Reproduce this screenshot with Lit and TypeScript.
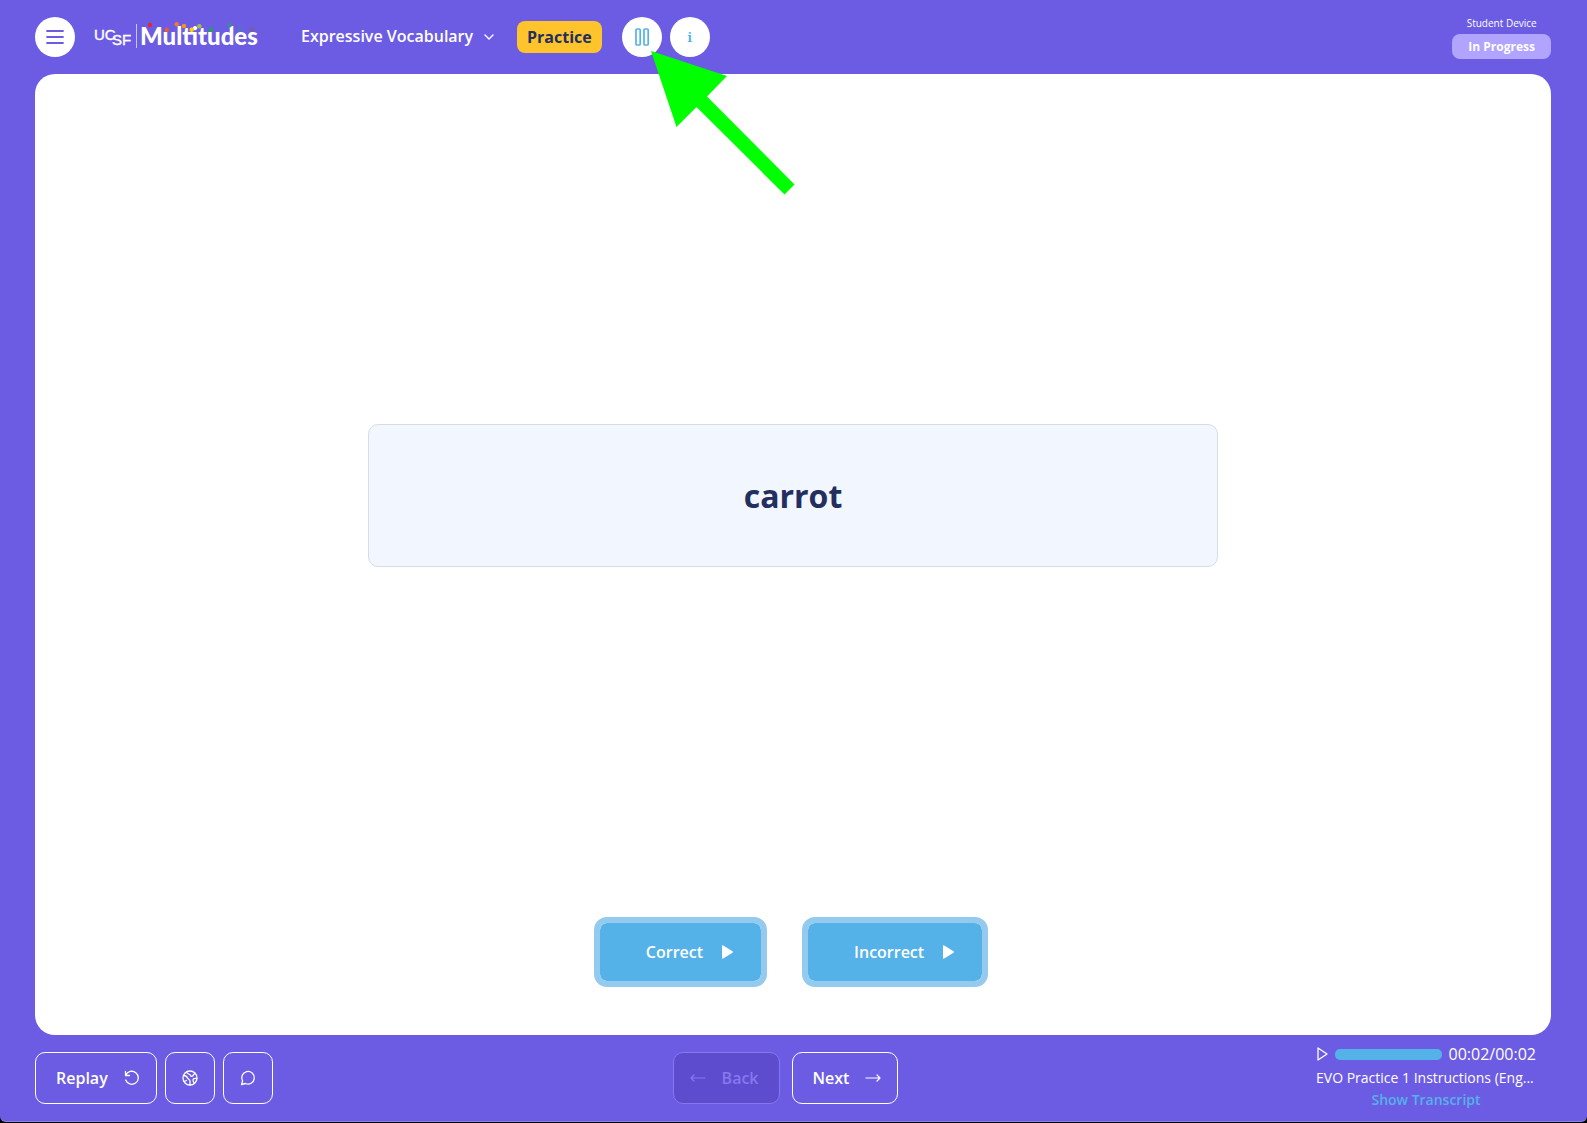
import { LitElement, html, css, svg } from "lit";
import { customElement, property } from "lit/decorators.js";

const DOTS: [number, number, string][] = [
  [56, 8, "#e8262d"], [72.7, 12.7, "#f05a28"], [82.7, 7.3, "#f4772a"], [90, 9, "#f7941d"],
  [97.7, 12.7, "#ffd400"], [105.3, 9.3, "#a3c23c"], [117, 12.7, "#1ca64c"], [135.7, 8.3, "#35918c"],
  [145.7, 12.5, "#4d78b8"], [157.7, 12.5, "#74609f"],
];

@customElement("brand-logo")
export class BrandLogo extends LitElement {
  static styles = css`
    :host { display: block; }
    svg { display: block; }
    .org { font: 400 15px "Liberation Sans", sans-serif; fill: #fff; stroke: #fff; stroke-width: 0.4px; }
    .name { font: 900 24px Lato, sans-serif; fill: #fff; }
  `;
  render() {
    return html`<svg width="164" height="40" viewBox="0 0 164 40" role="img" aria-label="UCSF Multitudes">
      <text class="org" x="0" y="23">UC</text>
      <text class="org" x="18" y="28">SF</text>
      <path d="M42.500 7V31" stroke="#c9c3f6" />
      <text class="name" x="46" y="28">Multitudes</text>
      ${DOTS.map(([x, y, c]) => svg`<circle cx=${x} cy=${y} r="2.200" fill=${c}></circle>`)}
    </svg>`;
  }
}

@customElement("pointer-arrow")
export class PointerArrow extends LitElement {
  static styles = css`
    :host { display: block; pointer-events: none; }
    svg { display: block; }
  `;
  render() {
    return html`<svg width="145" height="145" viewBox="0 0 145 145" aria-hidden="true">
      <path fill="#00ff00" d="M0 0L76 25L56 45.500L143.500 133.500L133.500 143.500L45.500 56L25.500 76Z" />
    </svg>`;
  }
}

@customElement("audio-status")
export class AudioStatus extends LitElement {
  @property() track = "";
  @property() elapsed = "00:00";
  @property() total = "00:00";

  static styles = css`
    :host { display: block; width: 220px; color: #fff; font: 14px/22px "Open Sans", sans-serif; }
    .row { display: flex; align-items: center; gap: 7px; height: 25px; }
    .play { display: flex; padding: 0; border: 0; background: none; color: inherit; cursor: pointer; }
    progress { appearance: none; flex: 1; min-width: 0; height: 11px; border: 0; border-radius: 5px; overflow: hidden; background: #fff; }
    progress::-webkit-progress-bar { background: #55b2e9; }
    progress::-webkit-progress-value { background: #55b2e9; }
    .time { font-size: 16px; }
    .track { margin: 0; overflow: hidden; white-space: nowrap; }
    .transcript { display: block; text-align: center; font-weight: 600; color: #55b2e9; text-decoration: none; }
  `;
  render() {
    return html`
      <div class="row">
        <button class="play" aria-label="Play audio">
          <svg width="12" height="14" viewBox="0 0 12 14" fill="none" stroke="currentColor" stroke-width="1.300" stroke-linejoin="round"><path d="M2 1L11 7L2 13Z" /></svg>
        </button>
        <progress max="100" value="100" aria-label="Audio position"></progress>
        <span class="time">${this.elapsed}/${this.total}</span>
      </div>
      <p class="track">${this.track}</p>
      <a class="transcript" href="#transcript">Show Transcript</a>
    `;
  }
}

@customElement("app-root")
export class AppRoot extends LitElement {
  static styles = css`
    :host { display: block; background: #000; font: 16px/24px "Open Sans", sans-serif; color: #fff; }
    * { box-sizing: border-box; }
    button, select { font: inherit; color: inherit; cursor: pointer; }
    svg { display: block; flex: none; }
    .page { display: flex; flex-direction: column; min-height: 100vh; padding-bottom: 1px; }
    .shell { flex: 1; display: flex; flex-direction: column; padding: 0 36px 0 35px; background: #6c5ce4; border-bottom: 1px solid #8c80e6; border-radius: 0 0 6px 6px; }
    header { display: flex; align-items: center; height: 74px; }
    .round { display: grid; place-items: center; width: 40px; height: 40px; padding: 0; border: 0; border-radius: 50%; background: #fff; color: #55b2e9; }
    .menu { color: #6c5ce4; }
    .logo { margin-left: 19px; }
    .task { display: grid; align-items: center; margin-left: 43px; padding-bottom: 2px; }
    .task select { grid-area: 1 / 1; appearance: none; padding: 0 22px 0 0; border: 0; background: none; font-weight: 600; }
    .task svg { grid-area: 1 / 1; justify-self: end; margin-top: 2px; pointer-events: none; }
    .badge { margin-left: 21px; padding: 4px 10px; border-radius: 8px; background: #ffc32b; color: #222f5f; font-weight: 700; }
    .tools { display: flex; gap: 8px; margin-left: 20px; }
    .pause { position: relative; }
    pointer-arrow { position: absolute; left: 29px; top: 34px; z-index: 1; }
    .info { font: 700 13px/20px "Noto Serif", "DejaVu Serif", serif; }
    .device { margin-left: auto; text-align: center; font-size: 10px; line-height: 18px; }
    .state { margin-top: 3px; padding: 4px 16px 3px; border-radius: 8px; background: #b0a4ff; font-size: 12px; font-weight: 700; }
    .device div:first-child { line-height: 16px; }
    main { flex: 1; display: flex; flex-direction: column; padding-bottom: 48px; border-radius: 20px; background: #fff; }
    .stage { flex: 1; display: flex; align-items: center; justify-content: center; }
    .card { flex: 0 1 850px; margin: 0; padding: 47px 24px; border: 1px solid #d5dee8; border-radius: 10px; background: #f2f6ff; color: #222f5f; text-align: center; font-size: 32px; line-height: 47px; font-weight: 700; }
    .answers { display: flex; justify-content: center; gap: 35px; padding-right: 4px; }
    .answer { display: flex; align-items: center; gap: 19px; height: 70px; padding: 0 28px 0 46px; border: 6px solid #93caee; border-radius: 13px; background: #55b2e9; background-clip: padding-box; font-weight: 600; }
    footer { display: grid; grid-template-columns: 1fr auto 1fr; align-items: center; height: 86px; padding-right: 15px; }
    .group { display: flex; gap: 8px; }
    .nav { gap: 12px; }
    .outline { display: flex; align-items: center; justify-content: center; gap: 16px; height: 52px; padding: 0 16px; border: 1px solid #fff; border-radius: 10px; background: none; font-weight: 600; }
    .replay { padding: 0 16px 0 20px; }
    .next { padding: 0 16px 0 20px; }
    .back { padding: 0 20px 0 16px; }
    .outline:disabled { background: #5d4dce; border-color: #8678ee; color: #8678ee; cursor: default; }
    audio-status { justify-self: end; padding-bottom: 4px; }
  `;

  private play = html`<svg width="11" height="14" viewBox="0 0 11 14" fill="currentColor"><path d="M0 1.200Q0 0 1.200 .5L10.500 6.300Q11.300 7 10.500 7.700L1.200 13.500Q0 14 0 12.800Z" /></svg>`;

  render() {
    return html`
      <div class="page"><div class="shell">
        <header>
          <button class="round menu" aria-label="Menu">
            <svg width="18" height="14" viewBox="0 0 18 14" stroke="currentColor" stroke-width="1.800" stroke-linecap="round"><path d="M1 1H17M1 7H17M1 13H17" /></svg>
          </button>
          <brand-logo class="logo"></brand-logo>
          <div class="task">
            <select aria-label="Task"><option>Expressive Vocabulary</option></select>
            <svg width="14" height="14" viewBox="0 0 14 14" fill="none" stroke="currentColor" stroke-width="1.400" stroke-linecap="round" stroke-linejoin="round"><path d="M3 5L7 9L11 5" /></svg>
          </div>
          <span class="badge">Practice</span>
          <div class="tools">
            <div class="pause">
              <button class="round" aria-label="Pause">
                <svg width="16" height="20" viewBox="0 0 16 20" fill="none" stroke="currentColor" stroke-width="1.700"><rect x="2" y="2" width="4.200" height="16" rx="1" /><rect x="10" y="2" width="4.200" height="16" rx="1" /></svg>
              </button>
              <pointer-arrow></pointer-arrow>
            </div>
            <button class="round info" aria-label="Information">i</button>
          </div>
          <div class="device">
            <div>Student Device</div>
            <div class="state">In Progress</div>
          </div>
        </header>
        <main>
          <div class="stage"><h1 class="card">carrot</h1></div>
          <div class="answers">
            <button class="answer">Correct ${this.play}</button>
            <button class="answer">Incorrect ${this.play}</button>
          </div>
        </main>
        <footer>
          <div class="group">
            <button class="outline replay">Replay
              <svg width="16" height="16" viewBox="0 0 16 16" fill="none" stroke="currentColor" stroke-width="1.300" stroke-linecap="round" stroke-linejoin="round"><path d="M1.500 1.500V5.500H5.500M1.800 5.300A6.500 6.500 0 1 1 1.700 10" /></svg>
            </button>
            <button class="outline" aria-label="Language">
              <svg width="16" height="16" viewBox="0 0 16 16" fill="none" stroke="currentColor" stroke-width="1.300" stroke-linecap="round" stroke-linejoin="round"><circle cx="8" cy="8" r="7" /><path d="M1.500 5.500C4 5.500 5 6.500 5.500 8C6 9.500 8 9 8 11V15M4.500 2.200C5 4.500 8 3.500 8.500 5.500C9 7 11 6.500 11.500 4.500L13.300 3.500M14.800 8.500C12.500 7.800 10.800 9 11 10.500C11.200 12 12 12 12 13.500M2.200 11.500L4.500 10.500" /></svg>
            </button>
            <button class="outline" aria-label="Comments">
              <svg width="16" height="16" viewBox="0 0 16 16" fill="none" stroke="currentColor" stroke-width="1.300" stroke-linecap="round" stroke-linejoin="round"><path d="M1.500 14.500L2.600 11A6.300 6.300 0 1 1 5.400 13.500Z" /></svg>
            </button>
          </div>
          <div class="group nav">
            <button class="outline back" disabled>
              <svg width="16" height="8" viewBox="0 0 16 8" fill="none" stroke="currentColor" stroke-width="1.200" stroke-linecap="round" stroke-linejoin="round"><path d="M4 1L1 4L4 7M1 4H15" /></svg>
              Back
            </button>
            <button class="outline next">Next
              <svg width="16" height="8" viewBox="0 0 16 8" fill="none" stroke="currentColor" stroke-width="1.200" stroke-linecap="round" stroke-linejoin="round"><path d="M12 1L15 4L12 7M15 4H1" /></svg>
            </button>
          </div>
          <audio-status track="EVO Practice 1 Instructions (Eng..." elapsed="00:02" total="00:02"></audio-status>
        </footer>
      </div></div>
    `;
  }
}
